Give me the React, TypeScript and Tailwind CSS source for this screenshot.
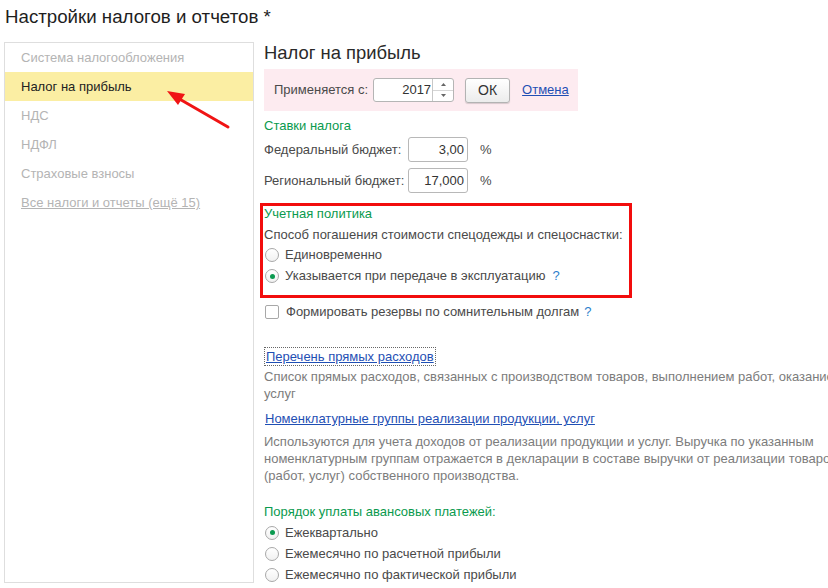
import React from "react"

const font = { fontFamily: '"Liberation Sans", Arial, sans-serif' }

function Radio({ checked }: { checked?: boolean }) {
  return (
    <span className="ml-[1px] flex h-[14px] w-[14px] shrink-0 items-center justify-center rounded-full border border-[#a8a8a8] bg-gradient-to-b from-white to-[#f1f1f1]">
      {checked && <span className="h-[5px] w-[5px] rounded-full bg-[#0b9a50]" />}
    </span>
  )
}

function RadioRow({ label, checked, hint }: { label: string; checked?: boolean; hint?: boolean }) {
  return (
    <div className="flex h-[20px] items-center">
      <Radio checked={checked} />
      <span className="ml-[6px]">{label}</span>
      {hint && <span className="ml-[7px] text-[#2c7fcc]">?</span>}
    </div>
  )
}

function NumField({ value }: { value: string }) {
  return (
    <div className="flex h-[25px] w-[60px] items-center justify-end rounded-[3px] border border-[#b8b8b8] bg-white pr-[3px] text-[#333]">
      {value}
    </div>
  )
}

export default function App() {
  const nav = [
    { label: "Система налогообложения" },
    { label: "Налог на прибыль", active: true },
    { label: "НДС" },
    { label: "НДФЛ" },
    { label: "Страховые взносы" },
    { label: "Все налоги и отчеты (ещё 15)", link: true },
  ]

  return (
    <div
      className="relative h-[588px] w-[828px] overflow-hidden bg-white text-[13px] text-[#4a4a4a]"
      style={font}
    >
      {/* Title */}
      <div className="h-[42px] pl-[5px] pt-[5px] text-[18.7px] leading-[24px] text-[#1e1e1e]">
        Настройки налогов и отчетов *
      </div>

      <div className="flex">
        {/* Left navigation */}
        <div className="ml-[4px] h-[541px] w-[250px] shrink-0 border border-[#dedede]">
          {nav.map((item) => (
            <div
              key={item.label}
              className={
                item.active
                  ? "flex h-[29px] items-center bg-[#fbeea3] pl-[16px] text-[#222]"
                  : "flex h-[29px] items-center pl-[16px] text-[#b4b4b4]"
              }
            >
              <span className={item.link ? "underline" : ""}>{item.label}</span>
            </div>
          ))}
        </div>

        {/* Right content */}
        <div className="ml-[10px] flex w-[595px] shrink-0 flex-col">
          <div className="h-[22px] text-[18.4px] leading-[22px] text-[#2a2a2a]">Налог на прибыль</div>

          <div className="mt-[5px] flex h-[42px] w-[314px] items-center bg-[#fdebf0] pl-[10px]">
            <span>Применяется с:</span>
            <div className="ml-[5px] flex h-[24px] w-[81px] rounded-[3px] border border-[#b5b5b5] bg-white">
              <div className="flex flex-1 items-center justify-end pr-[1px] text-[#333]">2017</div>
              <div className="flex w-[21px] flex-col border-l border-[#c8c8c8]">
                <div className="flex flex-1 items-center justify-center border-b border-[#d6d6d6]">
                  <svg width="5" height="3" viewBox="0 0 5 3">
                    <path d="M0 3 L2.5 0 L5 3 Z" fill="#666" />
                  </svg>
                </div>
                <div className="flex flex-1 items-center justify-center">
                  <svg width="5" height="3" viewBox="0 0 5 3">
                    <path d="M0 0 L2.5 3 L5 0 Z" fill="#666" />
                  </svg>
                </div>
              </div>
            </div>
            <button className="ml-[11px] h-[25px] w-[45px] rounded-[3px] border border-[#b3b3b3] bg-gradient-to-b from-white to-[#ececec] text-[14px] text-[#333] shadow-[0_1px_1px_rgba(0,0,0,0.15)]">
              ОК
            </button>
            <span className="ml-[12px] text-[#1f4fb4] underline">Отмена</span>
          </div>

          <div className="mt-[7px] h-[16px] leading-[16px] text-[#0a9a4e]">Ставки налога</div>

          <div className="mt-[3px] flex h-[25px] items-center">
            <span className="w-[144px]">Федеральный бюджет:</span>
            <NumField value="3,00" />
            <span className="ml-[12px]">%</span>
          </div>
          <div className="mt-[6px] flex h-[25px] items-center">
            <span className="w-[144px]">Региональный бюджет:</span>
            <NumField value="17,000" />
            <span className="ml-[12px]">%</span>
          </div>

          {/* Highlighted accounting policy */}
          <div className="ml-[-4px] mt-[10px] h-[95px] w-[372px] border-[3px] border-[#f20d0d] pl-[1px]">
            <div className="h-[16px] leading-[16px] text-[#0a9a4e]">Учетная политика</div>
            <div className="mt-[5px] h-[16px] leading-[16px]">
              Способ погашения стоимости спецодежды и спецоснастки:
            </div>
            <div className="mt-[2px]">
              <RadioRow label="Единовременно" />
            </div>
            <div className="mt-[1px]">
              <RadioRow label="Указывается при передаче в эксплуатацию" checked hint />
            </div>
          </div>

          <div className="mt-[4px] flex h-[20px] items-center">
            <span className="ml-[1px] h-[14px] w-[14px] rounded-[2px] border border-[#a8a8a8] bg-white" />
            <span className="ml-[7px]">Формировать резервы по сомнительным долгам</span>
            <span className="ml-[5px] text-[#2c7fcc]">?</span>
          </div>

          <div className="mt-[24px] flex h-[20px] items-center">
            <span className="border border-dotted border-[#666] px-[1px] leading-[17px] text-[#1f4fb4] underline">
              Перечень прямых расходов
            </span>
          </div>
          <div className="mt-[2px] leading-[17px] text-[#7c7c7c]">
            Список прямых расходов, связанных с производством товаров, выполнением работ, оказанием услуг
          </div>

          <div className="mt-[7px] flex h-[20px] items-center">
            <span className="pl-[1px] text-[#1f4fb4] underline">Номенклатурные группы реализации продукции, услуг</span>
          </div>
          <div className="mt-[4px] leading-[17px] text-[#7c7c7c]">
            Используются для учета доходов от реализации продукции и услуг. Выручка по указанным номенклатурным
            группам отражается в декларации в составе выручки от реализации товаров (работ, услуг) собственного
            производства.
          </div>

          <div className="mt-[20px] h-[16px] leading-[16px] text-[#0a9a4e]">Порядок уплаты авансовых платежей:</div>
          <div className="mt-[2px] flex flex-col">
            <div className="flex h-[21px] items-center">
              <Radio checked />
              <span className="ml-[6px]">Ежеквартально</span>
            </div>
            <div className="flex h-[21px] items-center">
              <Radio />
              <span className="ml-[6px]">Ежемесячно по расчетной прибыли</span>
            </div>
            <div className="flex h-[21px] items-center">
              <Radio />
              <span className="ml-[6px]">Ежемесячно по фактической прибыли</span>
            </div>
          </div>
        </div>
      </div>

      {/* Annotation arrow */}
      <svg className="pointer-events-none absolute left-0 top-0" width="828" height="588">
        <line x1="228" y1="127" x2="176" y2="97" stroke="#f01414" strokeWidth="3" strokeLinecap="round" />
        <polygon points="167,91 185,94 178,105" fill="#f01414" />
      </svg>
    </div>
  )
}
